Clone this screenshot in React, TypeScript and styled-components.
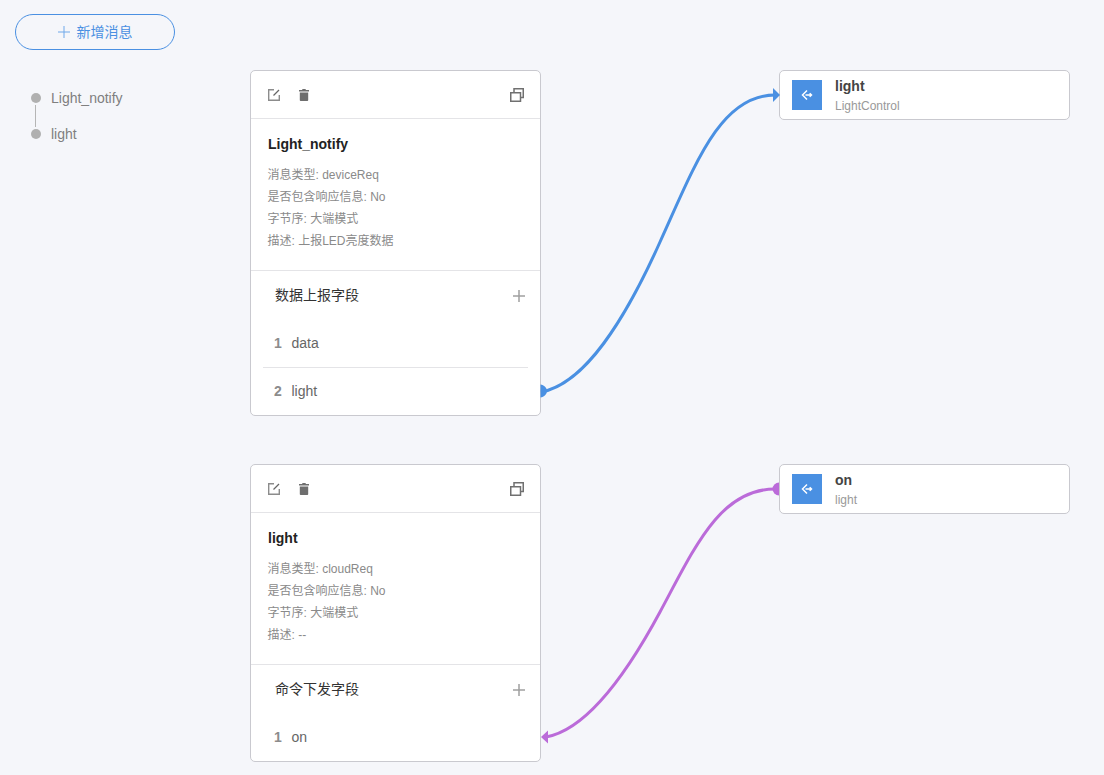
import React from "react";
import styled, { createGlobalStyle } from "styled-components";

const Global = createGlobalStyle`
  html, body { margin: 0; padding: 0; background: #f5f6fa; }
  body { font-family: "Liberation Sans", "Noto Sans CJK SC", Arial, sans-serif; }
  * { box-sizing: border-box; }
`;

const Page = styled.div`
  position: relative;
  width: 1104px;
  height: 775px;
  overflow: hidden;
  background: #f5f6fa;
  display: grid;
  grid-template-columns: 250px 291px 238px 291px;
  grid-template-rows: 70px auto;
`;

const TopBar = styled.div`
  grid-column: 1 / -1;
  padding: 14px 0 0 15px;
`;

const AddButton = styled.button`
  width: 160px;
  height: 36px;
  border: 1px solid #4a90e2;
  border-radius: 18px;
  background: transparent;
  color: #4a90e2;
  font: 14px/20px "Liberation Sans", "Noto Sans CJK SC", sans-serif;
  display: flex;
  align-items: center;
  justify-content: center;
  gap: 7px;
  padding: 0 0 1px;
`;

const Timeline = styled.ul`
  list-style: none;
  margin: 0;
  padding: 10px 0 0 31px;
`;

const TimelineItem = styled.li<{ $last?: boolean }>`
  position: relative;
  height: 36px;
  display: flex;
  align-items: center;
  gap: 10px;
  font-size: 14px;
  color: #7f7f7f;
  &::after {
    content: ${(p) => (p.$last ? "none" : '""')};
    position: absolute;
    left: 4px;
    top: 25px;
    width: 1px;
    height: 22px;
    background: #b5b5b5;
  }
`;

const Dot = styled.span`
  width: 10px;
  height: 10px;
  border-radius: 50%;
  background: #b0b0b0;
`;

const Column = styled.div`
  display: flex;
  flex-direction: column;
  gap: 48px;
`;

const Card = styled.section`
  background: #fff;
  border: 1px solid #c9c9cf;
  border-radius: 5px;
`;

const CardHead = styled.header`
  height: 48px;
  border-bottom: 1px solid #e4e4e7;
  display: flex;
  align-items: center;
  padding: 0 15px;
  gap: 14px;
`;

const HeadSpacer = styled.span`
  flex: 1;
`;

const CardBody = styled.div`
  height: 152px;
  padding: 15px 16px 0 17px;
  border-bottom: 1px solid #e4e4e7;
`;

const CardTitle = styled.h3`
  margin: 0 0 10px;
  font-size: 14px;
  line-height: 20px;
  font-weight: 700;
  color: #222;
`;

const Meta = styled.div`
  margin-left: -0.5px;
  font-size: 12px;
  line-height: 22px;
  color: #8a8a8a;
`;

const SectionHead = styled.div`
  height: 48px;
  padding: 0 15px 2px 24px;
  display: flex;
  align-items: center;
  justify-content: space-between;
  font-size: 14px;
  color: #333;
`;

const SectionPlus = styled.span`
  display: flex;
  margin-top: 3px;
`;

const FieldList = styled.div`
  padding: 0 12px;
`;

const Field = styled.div`
  height: 48px;
  display: flex;
  align-items: center;
  padding-left: 11px;
  font-size: 14px;
  color: #666;
  & + & {
    padding-bottom: 1px;
    border-top: 1px solid #e4e4e7;
  }
`;

const FieldIndex = styled.span`
  width: 17.5px;
  font-weight: 700;
  color: #8c8c8c;
`;

const Source = styled.div`
  height: 50px;
  background: #fff;
  border: 1px solid #c9c9cf;
  border-radius: 5px;
  display: flex;
  align-items: center;
  padding-left: 12px;
  gap: 13px;
`;

const RightColumn = styled.div`
  display: flex;
  flex-direction: column;
  gap: 344px;
`;

const SourceIcon = styled.span`
  width: 30px;
  height: 30px;
  background: #4a90e2;
  display: flex;
  align-items: center;
  justify-content: center;
`;

const SourceText = styled.div`
  display: flex;
  flex-direction: column;
  gap: 4px;
  margin-top: 1px;
`;

const SourceName = styled.div`
  font-size: 14px;
  line-height: 16px;
  font-weight: 700;
  color: #444;
`;

const SourceSub = styled.div`
  font-size: 12px;
  line-height: 16px;
  color: #999;
`;

const Wires = styled.svg`
  position: absolute;
  left: 0;
  top: 0;
  pointer-events: none;
`;

const EditIcon = () => (
  <svg width="16" height="16" viewBox="0 0 16 16" fill="none">
    <path d="M8 2.700H2.700v10.600h10.600V8" stroke="#8c8c8c" strokeWidth="1.4" />
    <path d="M7.500 8.500 13 3" stroke="#666" strokeWidth="1.3" />
  </svg>
);

const TrashIcon = () => (
  <svg width="16" height="16" viewBox="0 0 16 16">
    <path d="M6.300 2h3.400v1.100H13v1.500H3V3.100h3.300zM3.800 5.400h8.400v7.800c0 .5-.4.8-.8.8H4.600c-.4 0-.8-.3-.8-.8z" fill="#6e6e6e" />
  </svg>
);

const CopyIcon = () => (
  <svg width="16" height="16" viewBox="0 0 16 16" fill="none" stroke="#707070" strokeWidth="1.5">
    <path d="M5 5V1.750h9.250V10.500H11.500" />
    <rect x="1.750" y="5.750" width="9.750" height="8.500" />
  </svg>
);

const PlusIcon = ({ color, width }: { color: string; width: number }) => (
  <svg width="12" height="12" viewBox="0 0 12 12" fill="none" stroke={color} strokeWidth={width}>
    <path d="M6 0v12M0 6h12" />
  </svg>
);

const PortIcon = () => (
  <svg width="12" height="12" viewBox="0 0 12 12" fill="none" stroke="#fff" strokeWidth="1.5">
    <path d="M6 1.500 1.500 6 6 10.500" />
    <path d="M4.500 6h6M8.700 4.200 10.500 6 8.700 7.800" />
  </svg>
);

type Message = {
  name: string;
  type: string;
  desc: string;
  section: string;
  fields: string[];
};

const messages: Message[] = [
  { name: "Light_notify", type: "deviceReq", desc: "上报LED亮度数据", section: "数据上报字段", fields: ["data", "light"] },
  { name: "light", type: "cloudReq", desc: "--", section: "命令下发字段", fields: ["on"] },
];

const sources = [
  { name: "light", sub: "LightControl" },
  { name: "on", sub: "light" },
];

export default function App() {
  return (
    <Page>
      <Global />
      <TopBar>
        <AddButton>
          <PlusIcon color="#6fa8ea" width={1} />
          新增消息
        </AddButton>
      </TopBar>
      <Timeline>
        {messages.map((m, i) => (
          <TimelineItem key={m.name} $last={i === messages.length - 1}>
            <Dot />
            {m.name}
          </TimelineItem>
        ))}
      </Timeline>
      <Column>
        {messages.map((m) => (
          <Card key={m.name}>
            <CardHead>
              <EditIcon />
              <TrashIcon />
              <HeadSpacer />
              <CopyIcon />
            </CardHead>
            <CardBody>
              <CardTitle>{m.name}</CardTitle>
              <Meta>消息类型: {m.type}</Meta>
              <Meta>是否包含响应信息: No</Meta>
              <Meta>字节序: 大端模式</Meta>
              <Meta>描述: {m.desc}</Meta>
            </CardBody>
            <SectionHead>
              {m.section}
              <SectionPlus>
                <PlusIcon color="#a0a0a0" width={1.5} />
              </SectionPlus>
            </SectionHead>
            <FieldList>
              {m.fields.map((f, i) => (
                <Field key={f}>
                  <FieldIndex>{i + 1}</FieldIndex>
                  {f}
                </Field>
              ))}
            </FieldList>
          </Card>
        ))}
      </Column>
      <span />
      <RightColumn>
        {sources.map((s) => (
          <Source key={s.name}>
            <SourceIcon>
              <PortIcon />
            </SourceIcon>
            <SourceText>
              <SourceName>{s.name}</SourceName>
              <SourceSub>{s.sub}</SourceSub>
            </SourceText>
          </Source>
        ))}
      </RightColumn>
      <Wires width="1104" height="775" viewBox="0 0 1104 775" fill="none">
        <path d="M541 392C585 384 625 320 660 242C695 165 720 95 775 95" stroke="#4a90e2" strokeWidth="3" />
        <path d="M540.500 384.500C544 385 547 388 547 391C547 394 544 397 540.500 397.500z" fill="#4a90e2" />
        <path d="M773 88 780 95 773 102z" fill="#4a90e2" />
        <path d="M546 737C585 730 625 677 660 612C695 547 720 489 775 489" stroke="#bb6bd9" strokeWidth="3" />
        <path d="M541 737 548 730.500V743.500z" fill="#bb6bd9" />
        <path d="M779 482.500A6.500 6.500 0 0 0 779 495.500z" fill="#bb6bd9" />
      </Wires>
    </Page>
  );
}
